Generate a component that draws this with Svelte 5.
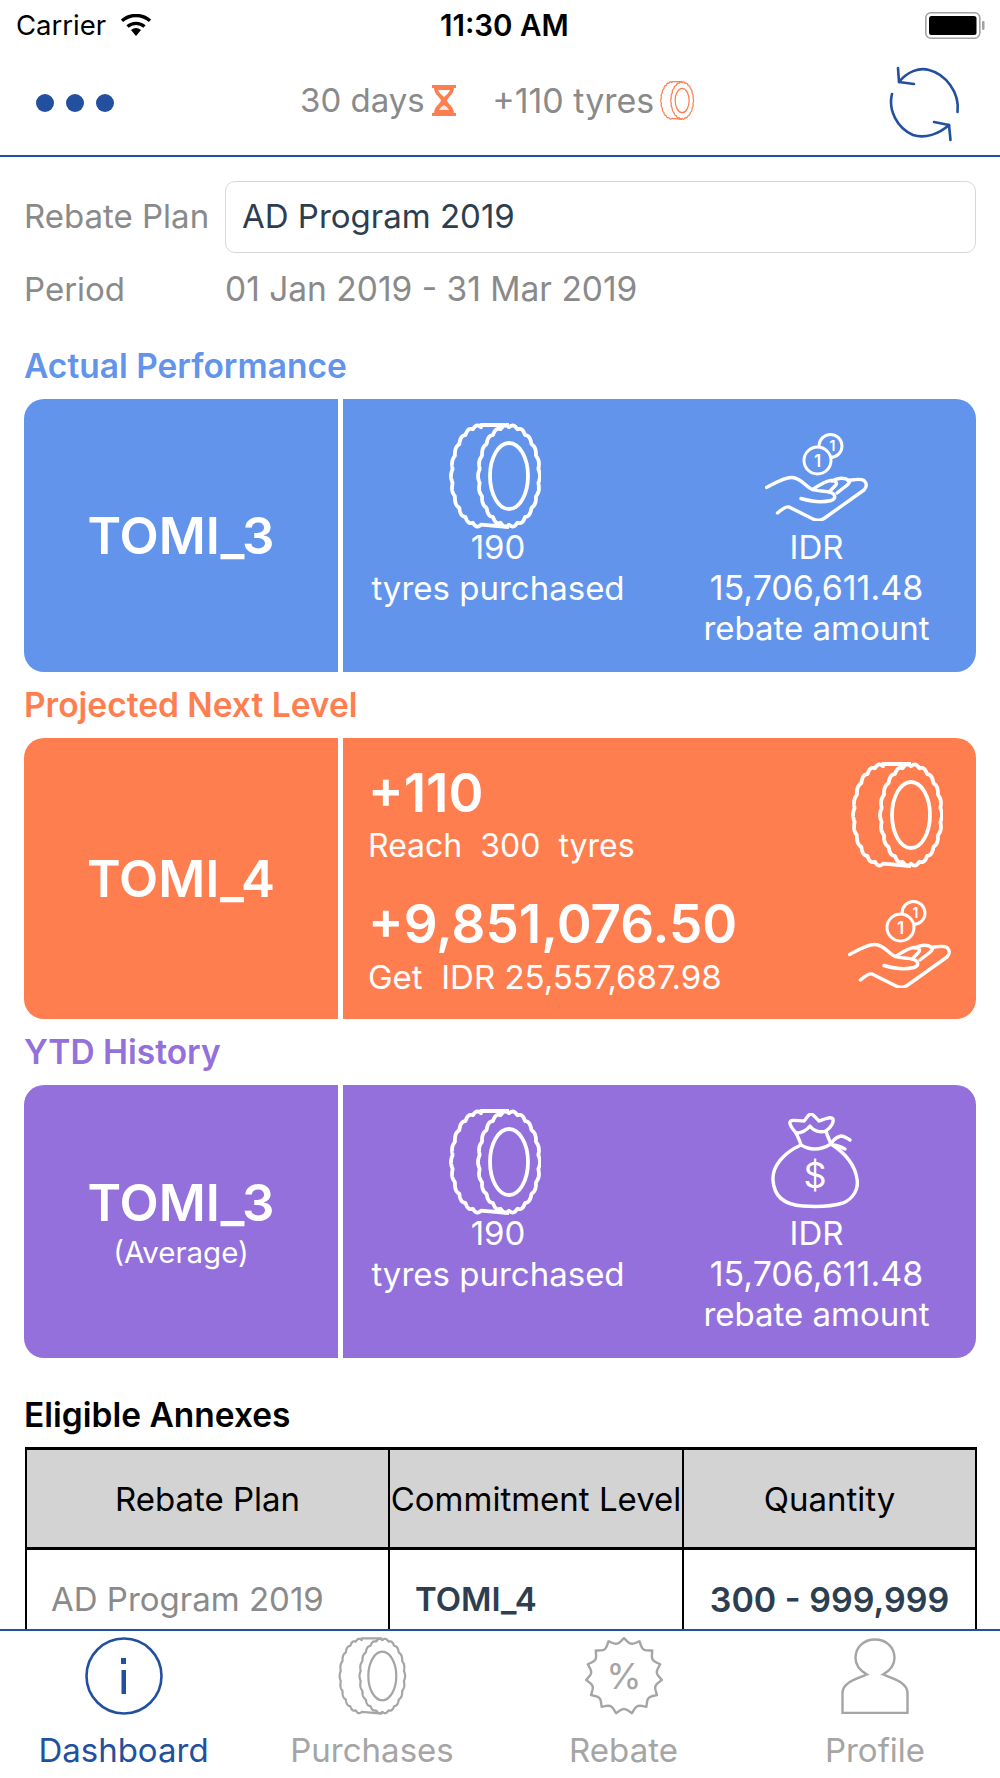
<script>
  function scallop(cx, cy, rx, ry, n, amp, t0, t1) {
    const pts = [];
    const steps = 260;
    for (let i = 0; i <= steps; i++) {
      const t = t0 + ((t1 - t0) * i) / steps;
      const k = 1 - amp + amp * Math.abs(Math.cos(n * t));
      pts.push((cx + rx * k * Math.cos(t)).toFixed(2) + ' ' + (cy + ry * k * Math.sin(t)).toFixed(2));
    }
    return pts;
  }
  const front = 'M' + scallop(60, 53, 31, 51, 11, 0.045, 0, Math.PI * 2).join('L') + 'Z';
  const back =
    'M60 2L32 2L' +
    scallop(32, 53, 30, 51, 11, 0.045, -Math.PI / 2, -Math.PI * 1.5).join('L') +
    'L60 104';
  const badge = (() => {
    const pts = [];
    for (let i = 0; i < 300; i++) {
      const t = (i / 300) * Math.PI * 2;
      const k = 1 - 0.13 * Math.abs(Math.sin(7.5 * t));
      const a = t - Math.PI / 2;
      pts.push((39 + 38 * k * Math.cos(a)).toFixed(2) + ' ' + (39 + 38 * k * Math.sin(a)).toFixed(2));
    }
    return 'M' + pts.join('L') + 'Z';
  })();
  const tabs = ['Dashboard', 'Purchases', 'Rebate', 'Profile'];
</script>

{#snippet tyre(cls, sw)}
  <svg class={cls} viewBox="0 0 92 106" fill="none" stroke="currentColor" stroke-width={sw} stroke-linejoin="round">
    <path d={back} />
    <path d={front} />
    <ellipse cx="60" cy="53" rx="19" ry="33" />
  </svg>
{/snippet}

{#snippet hand(cls)}
  <svg class={cls} viewBox="0 0 103 88" fill="none" stroke="currentColor" stroke-width="3.4" stroke-linecap="round" stroke-linejoin="round">
    <path d="M1.5 54.5C10 50 20 44 27 44.5C37 45 40 54 47.5 56.5C53 58.5 60 57.5 66 59.5C71 61.5 71 66 66 67.5C58 69.5 46 68.5 36 65.5" />
    <path d="M47.5 56.5C53 53 60 48 66 47.5C71 47 73 50 70 53L64 59" />
    <path d="M67 48C72 45 80 44 84 47.5C85 49 84 51 81 53L72 60" />
    <path d="M83 47.5C88 47 95 45 99 47.5C102 50 102 54 99 57L59 85.5C55 88 51 87.5 48 86L24 74C20 73 15 78 12.5 80" />
    <circle cx="65.5" cy="13" r="11.5" stroke-width="3" />
    <text x="67.5" y="18" class="coin-t small">1</text>
    <circle cx="52.5" cy="27.5" r="13.5" stroke-width="3" class="coin" />
    <text x="52.5" y="33.5" class="coin-t">1</text>
  </svg>
{/snippet}

<div class="phone">
  <div class="status">
    <div class="st-left">
      <span>Carrier</span>
      <svg class="wifi" viewBox="0 0 34 22">
        <path d="M17 22l-5-6a8 8 0 0 1 10 0z" fill="#000" />
        <path d="M8.5 12.5a13 13 0 0 1 17 0" fill="none" stroke="#000" stroke-width="3.4" />
        <path d="M3 6.8a21 21 0 0 1 28 0" fill="none" stroke="#000" stroke-width="3.4" />
      </svg>
    </div>
    <span class="time">11:30 AM</span>
    <svg class="battery" viewBox="0 0 60 27">
      <rect x="0.8" y="0.8" width="54" height="25.4" rx="5" fill="none" stroke="#a2a2a2" stroke-width="1.6" />
      <rect x="4" y="4" width="47.5" height="19" rx="2.5" fill="#000" />
      <rect x="57" y="9" width="2.5" height="9" rx="1.2" fill="#a2a2a2" />
    </svg>
  </div>

  <header class="nav">
    <div class="dots"><i></i><i></i><i></i></div>
    <div class="nav-mid">
      <span class="nav-item">30 days
        <svg class="glass" viewBox="0 0 26 33">
          <path d="M1 1h24v3h-2c0 6-6 9-7 12.5c1 3.5 7 6.5 7 12.5h2v3H1v-3h2c0-6 6-9 7-12.5C9 13 3 10 3 4H1z" fill="#ff7e4f" />
          <path d="M7 6h12c-1 3-4 5-6 7c-2-2-5-4-6-7z" fill="#fff" />
          <path d="M8 26c1-2 3-4 5-5c2 1 4 3 5 5z" fill="#ffe5da" />
        </svg>
      </span>
      <span class="nav-item tyres">+110 tyres
        {@render tyre('tyre-top', 3.4)}
      </span>
    </div>
    <svg class="refresh" viewBox="0 0 72 76" fill="none" stroke="#23509e" stroke-width="2.6" stroke-linecap="round" stroke-linejoin="round">
      <path d="M10 16C18 6 30 1 40 4C56 8 71 26 68.5 46" />
      <path d="M9 2L10 16L25 18" />
      <path d="M3 28C-1 44 8 62 24 69C36 73 50 68 60 59" />
      <path d="M45 56L60 59L61.5 74" />
    </svg>
  </header>

  <main class="content">
    <div class="plan-row">
      <span class="lbl">Rebate Plan</span>
      <div class="input">AD Program 2019</div>
    </div>
    <div class="period-row">
      <span class="lbl">Period</span>
      <span class="period">01 Jan 2019 - 31 Mar 2019</span>
    </div>

    <h2 class="sec c-blue first">Actual Performance</h2>
    <section class="card blue">
      <div class="level"><b>TOMI_3</b></div>
      <div class="stats">
        <div class="stat">
          <div class="ico">{@render tyre('tyre-big', 3.8)}</div>
          <p>190</p>
          <p>tyres purchased</p>
        </div>
        <div class="stat">
          <div class="ico">{@render hand('hand-big')}</div>
          <p>IDR</p>
          <p class="num">15,706,611.48</p>
          <p>rebate amount</p>
        </div>
      </div>
    </section>

    <h2 class="sec c-orange">Projected Next Level</h2>
    <section class="card orange">
      <div class="level"><b>TOMI_4</b></div>
      <div class="proj">
        <div class="proj-row">
          <div>
            <div class="big">+110</div>
            <div class="sub">Reach&nbsp; 300&nbsp; tyres</div>
          </div>
          {@render tyre('tyre-big', 3.8)}
        </div>
        <div class="proj-row second">
          <div>
            <div class="big">+9,851,076.50</div>
            <div class="sub get">Get&nbsp; IDR 25,557,687.98</div>
          </div>
          {@render hand('hand-big')}
        </div>
      </div>
    </section>

    <h2 class="sec c-purple">YTD History</h2>
    <section class="card purple">
      <div class="level"><b>TOMI_3</b><small>(Average)</small></div>
      <div class="stats">
        <div class="stat">
          <div class="ico">{@render tyre('tyre-big', 3.8)}</div>
          <p>190</p>
          <p>tyres purchased</p>
        </div>
        <div class="stat">
          <div class="ico">
            <svg class="bag" viewBox="0 0 88 96" fill="none" stroke="currentColor" stroke-width="3.4" stroke-linecap="round" stroke-linejoin="round">
              <path d="M30 32C12 40 1 54 2 67C3 84 14 92 32 93C46 94 62 93 72 90C82 86 88 76 86 66C84 52 74 40 60 31" />
              <path d="M30 32C40 38 50 37 60 31C58 26 56 22 55 18C60 14 63 10 62 6C60 3 54 6 48 8C44 4 42 1 40 1C37 1 36 5 33 8C27 8 20 6 19 9C18 12 22 16 25 20C27 24 29 28 30 32Z" />
              <path d="M25 20C30 20 35 18 39 13C42 18 50 20 55 18" />
              <path d="M60 31C62 27 66 24 70 23C73 23 76 25 79 27M62 32C66 32 70 34 74 36" />
              <text x="44" y="75" class="dollar">$</text>
            </svg>
          </div>
          <p>IDR</p>
          <p class="num">15,706,611.48</p>
          <p>rebate amount</p>
        </div>
      </div>
    </section>

    <h2 class="sec annex">Eligible Annexes</h2>
    <div class="table">
      <div class="th">Rebate Plan</div>
      <div class="th">Commitment Level</div>
      <div class="th">Quantity</div>
      <div class="td plan">AD Program 2019</div>
      <div class="td lvl">TOMI_4</div>
      <div class="td qty">300 - 999,999</div>
    </div>
  </main>

  <nav class="tabs">
    {#each tabs as t, i}
      <div class="tab" class:active={i === 0} class:shift={i === 1} class:none={i === 3}>
        <div class="tab-ico">
          {#if i === 0}
            <svg class="ti" viewBox="0 0 78 78">
              <circle cx="39" cy="39" r="37.5" fill="none" stroke="currentColor" stroke-width="2.6" />
              <rect x="36" y="21" width="5" height="6" fill="currentColor" />
              <rect x="36.5" y="33" width="4.5" height="24" fill="currentColor" />
            </svg>
          {:else if i === 1}
            {@render tyre('tyre-tab', 3)}
          {:else if i === 2}
            <svg class="ti" viewBox="0 0 78 78" fill="none" stroke="currentColor" stroke-width="2.4" stroke-linejoin="round">
              <path d={badge} />
              <text x="39" y="52" class="pct">%</text>
            </svg>
          {:else}
            <svg class="ti prof" viewBox="0 0 68 76" fill="none" stroke="currentColor" stroke-width="2.4">
              <path d="M1.5 75V55C1.5 45 14 41 26 36.5C18 32 14.5 26 14.5 20C14.5 9 23 1.5 34 1.5C45 1.5 53.5 9 53.5 20C53.5 26 50 32 42 36.5C54 41 66.5 45 66.5 55V75Z" />
            </svg>
          {/if}
        </div>
        <span>{t}</span>
      </div>
    {/each}
  </nav>
</div>

<style>
  :global(body) { margin: 0; background: #fff; }
  .phone {
    width: 1000px; height: 1778px; display: flex; flex-direction: column; overflow: hidden;
    font-family: Inter, "Liberation Sans", sans-serif; background: #fff; color: #000;
  }
  svg { display: block; }
  .status {
    height: 50px; flex: none; display: flex; align-items: center; justify-content: space-between;
    padding: 0 15px 0 16px; font-size: 27.5px; position: relative;
  }
  .st-left { display: flex; align-items: center; gap: 13px; }
  .wifi { width: 34px; height: 22px; }
  .time { font-weight: 600; position: absolute; left: 440px; font-size: 29.5px; }
  .battery { width: 60px; height: 27px; }

  .nav {
    height: 105px; flex: none; border-bottom: 2.5px solid #23509e; display: flex; align-items: center;
    justify-content: space-between; padding: 0 39px 0 36px; position: relative;
  }
  .dots { display: flex; gap: 12px; }
  .dots i { width: 18px; height: 18px; border-radius: 50%; background: #23509e; display: block; }
  .nav-mid { position: absolute; left: 300px; top: 31px; display: flex; gap: 35.5px; color: #8a8a8a; font-size: 33px; }
  .nav-item { display: flex; align-items: center; gap: 6px; height: 38px; }
  .nav-item.tyres { font-size: 34px; }
  .glass { width: 26px; height: 33px; }
  .tyre-top { width: 38px; height: 39px; color: #ff7e4f; margin-left: -2px; }
  .refresh { width: 72px; height: 76px; margin-top: 3px; }

  .content { flex: 1; min-height: 0; overflow: hidden; padding: 22px 24px 0; }
  .plan-row { display: flex; align-items: center; height: 75px; }
  .lbl { width: 201px; flex: none; color: #8a8a8a; font-size: 33px; white-space: nowrap; }
  .plan-row .lbl { padding-bottom: 2px; }
  .input {
    flex: 1; height: 72px; box-sizing: border-box; border: 1.5px solid #d8d8d8; border-radius: 10px;
    display: flex; align-items: center; padding: 0 0 2px 16px; font-size: 33px; color: #2c3e50;
  }
  .period-row { display: flex; align-items: center; height: 36px; margin-top: 17px; }
  .period { color: #8a8a8a; font-size: 33.5px; }

  .sec { margin: 17px 0 16px; font-size: 33.5px; font-weight: 600; height: 33px; line-height: 33px; }
  .sec.first { margin-top: 43px; }
  .c-blue { color: #6394ec; }
  .c-orange { color: #ff7e4f; }
  .c-purple { color: #9370db; }
  .annex { color: #000; margin-top: 41px; margin-bottom: 15px; }

  .card { display: grid; grid-template-columns: 314px 1fr; gap: 5px; border-radius: 20px; overflow: hidden; color: #fff; background: #fff; }
  .level, .stats, .proj { display: flex; }
  .level { flex-direction: column; align-items: center; justify-content: center; }
  .level b { font-size: 51px; font-weight: 600; line-height: 60px; }
  .level small { font-size: 29.5px; line-height: 34px; margin-top: 2px; }
  .purple .level { padding-bottom: 2px; box-sizing: border-box; }
  .blue .level, .blue .stats { background: #6394ec; }
  .orange .level, .orange .proj { background: #ff7e4f; }
  .purple .level, .purple .stats { background: #9370db; }
  .blue, .purple { height: 273px; }
  .orange { height: 281px; }

  .stats { display: grid; grid-template-columns: 310px 1fr; padding-top: 24px; }
  .stat { text-align: center; }
  .stat + .stat { padding-left: 4px; }
  .ico { height: 104px; display: flex; justify-content: center; }
  .stat p { margin: 0; font-size: 33px; line-height: 40.5px; white-space: nowrap; }
  .stat p.num { font-size: 34px; }
  .tyre-big { width: 92px; height: 106px; flex: none; margin-left: -6px; }
  .hand-big { width: 103px; height: 88px; margin-top: 10px; flex: none; }
  .bag { width: 88px; height: 96px; margin-top: 4px; margin-left: -4px; }
  .coin { fill: none; }
  .blue .coin { fill: #6394ec; }
  .orange .coin { fill: #ff7e4f; }
  .coin-t { font-size: 17px; font-weight: 600; fill: currentColor; stroke: none; text-anchor: middle; font-family: Inter, sans-serif; }
  .coin-t.small { font-size: 14px; }
  .dollar { font-size: 36px; font-weight: 400; fill: currentColor; stroke: none; text-anchor: middle; font-family: Inter, sans-serif; }

  .proj { flex-direction: column; padding: 27px 25px 0 25px; }
  .proj-row { display: flex; justify-content: space-between; align-items: flex-start; height: 131px; }
  .proj-row .tyre-big { margin: -3px 8px 0 0; }
  .proj-row .hand-big { margin-right: 0; margin-top: 4px; }
  .proj-row.second { height: auto; }
  .big { font-size: 53px; font-weight: 600; line-height: 56px; }
  .sub { font-size: 32px; line-height: 36px; margin-top: 7px; }
  .sub.get { font-size: 33px; }

  .table {
    display: grid; grid-template-columns: 363px 294px 1fr; width: 952px; margin-left: 1px; box-sizing: border-box;
    border-top: 3px solid #000; border-left: 2.5px solid #000; border-right: 2.5px solid #000;
  }
  .th { height: 97px; background: #d3d3d3; border-bottom: 3px solid #000; border-right: 2.5px solid #000; display: flex; align-items: center; justify-content: center; font-size: 33px; white-space: nowrap; overflow: hidden; }
  .th:nth-child(3), .td:nth-child(6) { border-right: 0; }
  .td { height: 98px; border-right: 2.5px solid #000; display: flex; align-items: center; font-size: 33px; white-space: nowrap; }
  .plan { color: #8a8a8a; padding-left: 24px; }
  .lvl, .qty { color: #2c3e50; font-weight: 600; }
  .lvl { padding-left: 25px; }
  .qty { justify-content: center; font-size: 34px; }

  .tabs { height: 147px; flex: none; border-top: 2.5px solid #23509e; display: grid; grid-template-columns: repeat(4, 1fr); background: #fff; }
  .tab { display: flex; flex-direction: column; align-items: center; color: #a5a5a5; font-size: 33px; padding-right: 3px; }
  .tab.shift { padding-right: 6px; }
  .tab.none { padding-right: 0; }
  .tab.active { color: #23509e; }
  .tab-ico { height: 78px; margin-top: 6px; display: flex; align-items: center; }
  .ti { height: 78px; width: 78px; }
  .ti.prof { width: 68px; height: 76px; }
  .tyre-tab { width: 70px; height: 78px; }
  .tab span { margin-top: 17px; line-height: 36px; }
  .pct { font-size: 36px; fill: currentColor; stroke: none; text-anchor: middle; font-family: Inter, sans-serif; }
</style>
